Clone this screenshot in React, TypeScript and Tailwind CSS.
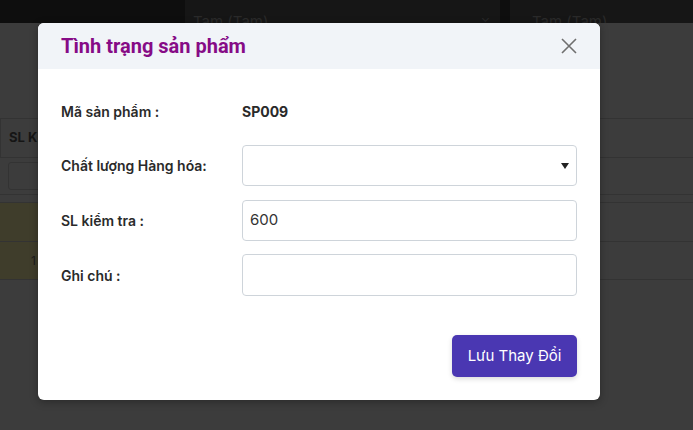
const rows = [
  { h: "h-[39px]", tint: false },
  { h: "h-[38px]", tint: false },
];

const App = () => {
  return (
    <div className="relative w-[693px] h-[430px] overflow-hidden bg-[#3c3c3c] font-['Inter',sans-serif]">
      {/* page behind the backdrop */}
      <div className="flex h-[23px] bg-[#0e0e0e]">
        <div className="w-[185px]" />
        <div className="w-[315px] bg-[#161616] flex items-end justify-between pl-[8px] pr-[10px] overflow-hidden">
          <span className="text-[15px] leading-[14px] text-[#2a2a2a] translate-y-[6px]">Tam (Tam)</span>
          <span className="text-[12px] text-[#2a2a2a] translate-y-[4px]">⌄</span>
        </div>
        <div className="w-[10px]" />
        <div className="flex-1 bg-[#161616] flex items-end pl-[22px] overflow-hidden">
          <span className="text-[15px] leading-[14px] text-[#2a2a2a] translate-y-[6px]">Tam (Tam)</span>
        </div>
      </div>
      <div className="pt-[95px]">
        <div className="border-t border-[#333] h-[39px] flex items-center pl-[8px] border-l border-l-[#333]">
          <span className="text-[13px] font-bold text-[#151515]">SL Kiểm tra</span>
        </div>
        <div className="border-t border-[#333] h-[37px] flex items-center pl-[8px]">
          <div className="w-[200px] h-[28px] border border-[#333] rounded-[3px]" />
        </div>
        <div className="border-t border-[#333] h-[8px]" />
        {rows.map((r, i) => (
          <div key={i} className={`border-t border-[#333] ${r.h} flex items-center`}>
            <div className="w-[38px] h-full bg-[#3f3d2b] flex items-center justify-end pr-[2px]">
              {i === 1 && <span className="text-[12px] text-[#1c1c1c]">1</span>}
            </div>
          </div>
        ))}
        <div className="border-t border-[#333]" />
      </div>

      {/* modal */}
      <div className="absolute left-[38px] top-[23px] w-[562px] h-[377px] bg-white rounded-[6px] overflow-hidden shadow-[0_2px_8px_rgba(0,0,0,0.3)] flex flex-col">
        <div className="h-[46px] bg-[#f1f4f8] flex items-center justify-between pl-[23px] pr-[22px] shrink-0">
          <h2 className="font-['Roboto',sans-serif] font-bold text-[20px] text-[#860b86]">Tình trạng sản phẩm</h2>
          <svg width="18" height="18" viewBox="0 0 18 18" className="text-[#6f6f6f]">
            <path d="M2 2 L16 16 M16 2 L2 16" stroke="currentColor" strokeWidth="1.6" fill="none" />
          </svg>
        </div>
        <div className="flex flex-col pl-[23px] pr-[23px] pt-[31px]">
          <div className="flex items-center h-[22px]">
            <span className="w-[181px] text-[14px] font-semibold text-[#2a2a2a]">Mã sản phẩm :</span>
            <span className="text-[14px] font-bold text-[#2a2a2a]">SP009</span>
          </div>
          <div className="flex items-center mt-[23px]">
            <span className="w-[181px] text-[14px] font-semibold text-[#2a2a2a]">Chất lượng Hàng hóa:</span>
            <div className="flex-1 h-[41px] border border-[#ced4da] rounded-[4px] flex items-center justify-end pr-[7px]">
              <svg width="8" height="6" viewBox="0 0 8 6">
                <path d="M0 0 H8 L4 6 Z" fill="#222" />
              </svg>
            </div>
          </div>
          <div className="flex items-center mt-[14px]">
            <span className="w-[181px] text-[14px] font-semibold text-[#2a2a2a]">SL kiểm tra :</span>
            <div className="flex-1 h-[41px] border border-[#ced4da] rounded-[4px] flex items-center pl-[7px]">
              <span className="text-[15px] text-[#333]">600</span>
            </div>
          </div>
          <div className="flex items-center mt-[13px]">
            <span className="w-[181px] text-[14px] font-semibold text-[#2a2a2a]">Ghi chú :</span>
            <div className="flex-1 h-[42px] border border-[#ced4da] rounded-[4px]" />
          </div>
          <div className="flex justify-end mt-[39px]">
            <button className="w-[125px] h-[42px] bg-[#4a37b2] rounded-[5px] text-white text-[15px] shadow-[0_2px_5px_rgba(0,0,0,0.15)]">
              Lưu Thay Đổi
            </button>
          </div>
        </div>
      </div>
    </div>
  );
};

export default App;
